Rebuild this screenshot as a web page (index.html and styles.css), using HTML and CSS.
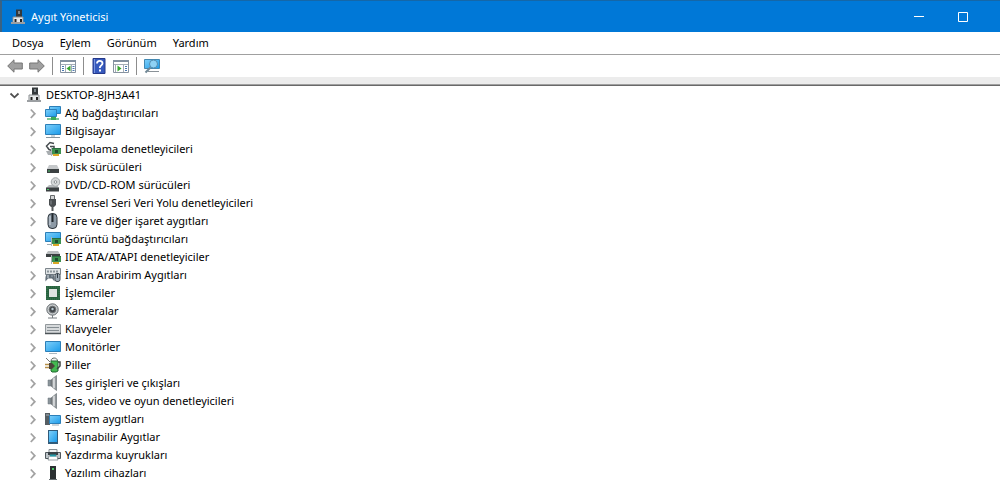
FILE: index.html
```html
<!DOCTYPE html>
<html lang="tr">
<head>
    <meta charset="UTF-8">
    <meta name="viewport" content="width=device-width, initial-scale=1.0">
    <title>Aygıt Yöneticisi</title>
    <link rel="stylesheet" href="styles.css">
</head>
<body>

<svg class="symbols" aria-hidden="true">
    <defs>
        <linearGradient id="blue" x1="0" y1="0" x2="1" y2="1">
            <stop offset="0" stop-color="#7fd0fa"/>
            <stop offset="1" stop-color="#1b9bea"/>
        </linearGradient>
        <linearGradient id="metal" x1="0" y1="0" x2="1" y2="0">
            <stop offset="0" stop-color="#606569"/>
            <stop offset="0.5" stop-color="#c4c8ca"/>
            <stop offset="1" stop-color="#777c80"/>
        </linearGradient>
    </defs>

    <symbol id="chevron" viewBox="0 0 16 16">
        <path d="M5.800 4.500 L9.800 8.700 L5.800 13" fill="none" stroke="#a3a3a3" stroke-width="1.800"/>
    </symbol>
    <symbol id="chevron-down" viewBox="0 0 16 16">
        <path d="M4.500 6.500 L8.500 10.300 L12.500 6.500" fill="none" stroke="#505050" stroke-width="1.800"/>
    </symbol>
    <symbol id="device" viewBox="0 0 16 16">
        <path d="M6 0.500 h6 v9 h-6 z" fill="#34383b"/>
        <path d="M8 2 h2 v3 h-2 z" fill="#7c858a"/>
        <path d="M3 8 h10 v6 h-10 z" fill="#e6e8e9" stroke="#8b8f92"/>
        <path d="M4.500 10 h2 v3 h-2 z M10 10 h2 v3 h-2 z" fill="#222"/>
        <path d="M1 13 h14 v2 h-14 z" fill="#9b9fa2"/>
    </symbol>
    <symbol id="board" viewBox="0 0 16 16">
        <path d="M7 7 h9 v6 h-9 z" fill="#3d9150"/>
        <path d="M7 7 h9 v1 h-9 z" fill="#2a6e41"/>
        <path d="M10 9 h3 v3 h-3 z" fill="#1d4d30"/>
        <path d="M8 13 h6 v2 h-6 z" fill="#dba828"/>
        <path d="M6 6 h1 v9 h-1 z" fill="#aeb4b8"/>
    </symbol>
    <symbol id="speaker" viewBox="0 0 16 16">
        <path d="M3 5 h3 v6 h-3 z" fill="#8b959b" stroke="#6a7378" stroke-width="0.500"/>
        <path d="M6 5 L11.500 0.500 V15.500 L6 11 z" fill="url(#metal)" stroke="#70787d" stroke-width="0.700"/>
        <path d="M9 3 v10" stroke="#eceeef"/>
    </symbol>
</svg>

<header class="titlebar">
    <svg class="icon"><use href="#device"/></svg>
    <h1>Aygıt Yöneticisi</h1>
    <div class="window-buttons">
        <button type="button" aria-label="Simge durumuna küçült">
            <svg viewBox="0 0 10 10"><path d="M0 4.500 h10" stroke="#fff"/></svg>
        </button>
        <button type="button" aria-label="Ekranı kapla">
            <svg viewBox="0 0 10 10"><path d="M0.500 0.500 h9 v9 h-9 z" fill="none" stroke="#fff"/></svg>
        </button>
    </div>
</header>

<nav class="menubar">
    <button type="button">Dosya</button>
    <button type="button">Eylem</button>
    <button type="button">Görünüm</button>
    <button type="button">Yardım</button>
</nav>

<div class="toolbar" role="toolbar" aria-label="Araçlar">
    <button type="button" aria-label="Geri">
        <svg class="icon" viewBox="0 0 16 16"><path d="M0.700 8 L7 1.800 V5 H15.300 V11 H7 V14.200 z" fill="#a0a0a0" stroke="#767676"/></svg>
    </button>
    <button type="button" aria-label="İleri">
        <svg class="icon" viewBox="0 0 16 16"><path d="M15.300 8 L9 1.800 V5 H0.700 V11 H9 V14.200 z" fill="#a0a0a0" stroke="#767676"/></svg>
    </button>
    <span class="separator"></span>
    <button type="button" aria-label="Konsol ağacını göster">
        <svg class="icon" viewBox="0 0 16 16">
            <path d="M0.500 2.500 h15 v12 h-15 z" fill="#fff" stroke="#8793a0"/>
            <path d="M0 2 h16 v2 h-16 z" fill="#8290a0"/>
            <path d="M1 6.500 h14 M5.500 7 v7 M11.500 7 v7" stroke="#a4adb7"/>
            <path d="M2 8.500 h2 M2 10.500 h2 M2 12.500 h2 M12.500 8.500 h2 M12.500 10.500 h2 M12.500 12.500 h2" stroke="#4a78b0"/>
            <path d="M10.500 7.500 v6 l-4 -3 z" fill="#36a52d"/>
        </svg>
    </button>
    <span class="separator"></span>
    <button type="button" aria-label="Yardım">
        <svg class="icon" viewBox="0 0 16 16">
            <path d="M2 0.500 h12 v15 h-12 z" fill="#3659bd" stroke="#25388a"/>
            <path d="M3.500 1 v14" stroke="#7894df"/>
            <path d="M6 5.500 C6 2 11.500 2 11.500 5.300 C11.500 7.500 8.800 7.300 8.800 10" fill="none" stroke="#fff" stroke-width="1.800"/>
            <path d="M8 11.500 h2 v2 h-2 z" fill="#fff"/>
        </svg>
    </button>
    <button type="button" aria-label="Eylem bölmesini göster">
        <svg class="icon" viewBox="0 0 16 16">
            <path d="M0.500 2.500 h15 v12 h-15 z" fill="#fff" stroke="#8793a0"/>
            <path d="M0 2 h16 v2 h-16 z" fill="#8290a0"/>
            <path d="M1 6.500 h14 M2.500 7 v7 M10.500 7 v7" stroke="#a4adb7"/>
            <path d="M12 8.500 h2 M12 10.500 h2 M12 12.500 h2" stroke="#4a78b0"/>
            <path d="M4.500 7.500 v6 l4 -3 z" fill="#36a52d"/>
        </svg>
    </button>
    <span class="separator"></span>
    <button type="button" aria-label="Donanım değişikliklerini tara">
        <svg class="icon" viewBox="0 0 16 16">
            <path d="M0.500 1.500 h15 v9 h-15 z" fill="url(#blue)" stroke="#4388b1"/>
            <path d="M4 13.500 h11" stroke="#8a9298"/>
            <circle cx="9.500" cy="6" r="4" fill="#8ed2f5" stroke="#548db0"/>
            <path d="M6.500 9.500 L1.500 14.500" stroke="#6f8795" stroke-width="2"/>
        </svg>
    </button>
</div>

<main>
    <div class="row root">
        <button type="button" class="expander" aria-label="Daralt"><svg class="icon"><use href="#chevron-down"/></svg></button>
        <svg class="icon"><use href="#device"/></svg>
        <span>DESKTOP-8JH3A41</span>
    </div>
    <ul class="tree">
        <li class="row">
            <button type="button" class="expander" aria-label="Genişlet"><svg class="icon"><use href="#chevron"/></svg></button>
            <svg class="icon" viewBox="0 0 16 16">
                <path d="M4.500 1.500 h11 v7 h-11 z" fill="url(#blue)" stroke="#2c7fb8"/>
                <path d="M0.500 4.500 h11 v7 h-11 z" fill="url(#blue)" stroke="#2c7fb8"/>
                <path d="M2 13 h12 v2 h-12 z" fill="#7fc795"/>
                <path d="M6 12 h5 v3 h-5 z" fill="#39ac58"/>
            </svg>
            <span>Ağ bağdaştırıcıları</span>
        </li>
        <li class="row">
            <button type="button" class="expander" aria-label="Genişlet"><svg class="icon"><use href="#chevron"/></svg></button>
            <svg class="icon" viewBox="0 0 16 16">
                <path d="M0.500 1.500 h15 v10 h-15 z" fill="url(#blue)" stroke="#2c7fb8"/>
                <path d="M6 12 h4 v2 h-4 z" fill="#cbd5da"/>
                <path d="M1 14.500 h14" stroke="#87959e"/>
            </svg>
            <span>Bilgisayar</span>
        </li>
        <li class="row">
            <button type="button" class="expander" aria-label="Genişlet"><svg class="icon"><use href="#chevron"/></svg></button>
            <svg class="icon" viewBox="0 0 16 16">
                <path d="M1 10 h6 l2 4 h-6 z" fill="#a8adb0"/>
                <path d="M9 2.500 L5 1.500 L1.500 5 L4 8.500 L7 9.500 M5 5.500 h4 v2" fill="none" stroke="#454b4e" stroke-width="1.500"/>
                <use href="#board"/>
            </svg>
            <span>Depolama denetleyicileri</span>
        </li>
        <li class="row">
            <button type="button" class="expander" aria-label="Genişlet"><svg class="icon"><use href="#chevron"/></svg></button>
            <svg class="icon" viewBox="0 0 16 16">
                <path d="M4 6 h8 l2 4 h-12 z" fill="#c5c8ca"/>
                <path d="M2 10 h12 v4 h-12 z" fill="#3b4042"/>
                <path d="M3 12 h2" stroke="#4bc466"/>
            </svg>
            <span>Disk sürücüleri</span>
        </li>
        <li class="row">
            <button type="button" class="expander" aria-label="Genişlet"><svg class="icon"><use href="#chevron"/></svg></button>
            <svg class="icon" viewBox="0 0 16 16">
                <path d="M4 8 h8 l2 3 h-13 z" fill="#b6babc"/>
                <circle cx="10.500" cy="5" r="4.300" fill="#d5d8d9" stroke="#a0a5a8"/>
                <circle cx="10.500" cy="5" r="1.300" fill="#fff" stroke="#898e91"/>
                <path d="M1 10.500 h13 v4 h-13 z" fill="#3b4042"/>
                <path d="M2 12.500 h2" stroke="#4bc466"/>
            </svg>
            <span>DVD/CD-ROM sürücüleri</span>
        </li>
        <li class="row">
            <button type="button" class="expander" aria-label="Genişlet"><svg class="icon"><use href="#chevron"/></svg></button>
            <svg class="icon" viewBox="0 0 16 16">
                <path d="M5.500 0.500 h4 v4 h-4 z" fill="#d3d5d6" stroke="#66696b"/>
                <path d="M4 4 h7 v6 l-2 2 h-3 l-2 -2 z" fill="#494d50"/>
                <path d="M7.500 11 v5" stroke="#55595b" stroke-width="2"/>
                <path d="M6 5.500 v4" stroke="#888d90"/>
            </svg>
            <span>Evrensel Seri Veri Yolu denetleyicileri</span>
        </li>
        <li class="row">
            <button type="button" class="expander" aria-label="Genişlet"><svg class="icon"><use href="#chevron"/></svg></button>
            <svg class="icon" viewBox="0 0 16 16">
                <rect x="3" y="0.500" width="9" height="15" rx="4" fill="#8d9aa6" stroke="#2f373e"/>
                <path d="M5 3 v9" stroke="#d3dbe2"/>
                <path d="M7.500 1 v8" stroke="#20272c" stroke-width="2"/>
            </svg>
            <span>Fare ve diğer işaret aygıtları</span>
        </li>
        <li class="row">
            <button type="button" class="expander" aria-label="Genişlet"><svg class="icon"><use href="#chevron"/></svg></button>
            <svg class="icon" viewBox="0 0 16 16">
                <path d="M0.500 1.500 h15 v9 h-15 z" fill="url(#blue)" stroke="#2c7fb8"/>
                <path d="M2 13.500 h5" stroke="#9ca9b0"/>
                <use href="#board"/>
            </svg>
            <span>Görüntü bağdaştırıcıları</span>
        </li>
        <li class="row">
            <button type="button" class="expander" aria-label="Genişlet"><svg class="icon"><use href="#chevron"/></svg></button>
            <svg class="icon" viewBox="0 0 16 16">
                <path d="M3 2 h10 l2 3 h-14 z" fill="#b9bdbf"/>
                <path d="M1 5 h14 v3 h-14 z" fill="#3b4042"/>
                <use href="#board"/>
            </svg>
            <span>IDE ATA/ATAPI denetleyiciler</span>
        </li>
        <li class="row">
            <button type="button" class="expander" aria-label="Genişlet"><svg class="icon"><use href="#chevron"/></svg></button>
            <svg class="icon" viewBox="0 0 16 16">
                <path d="M0.500 1.500 h15 v6 h-15 z" fill="#e0e4e6" stroke="#7c858b"/>
                <path d="M2 4.500 h12" stroke="#8b959b" stroke-width="2" stroke-dasharray="2 1"/>
                <path d="M0.500 14.500 C0 7 2 7 5 7.500 C8 7 10 7 9.500 14.500 L7 11.500 H3 z" fill="#65717b"/>
                <path d="M3 8 v3 M6.500 9 h1" stroke="#dce3e8"/>
                <rect x="10" y="6.500" width="5" height="8" rx="2" fill="#9eabb5" stroke="#424c54"/>
                <path d="M12.500 7 v4" stroke="#333c43"/>
            </svg>
            <span>İnsan Arabirim Aygıtları</span>
        </li>
        <li class="row">
            <button type="button" class="expander" aria-label="Genişlet"><svg class="icon"><use href="#chevron"/></svg></button>
            <svg class="icon" viewBox="0 0 16 16">
                <path d="M1 1 h14 v14 h-14 z" fill="#28623f"/>
                <path d="M2 2 h12 v12 h-12 z" fill="none" stroke="#4b8f62" stroke-width="0.600" stroke-dasharray="1 1"/>
                <path d="M4 4 h8 v8 h-8 z" fill="#dfe4e1"/>
            </svg>
            <span>İşlemciler</span>
        </li>
        <li class="row">
            <button type="button" class="expander" aria-label="Genişlet"><svg class="icon"><use href="#chevron"/></svg></button>
            <svg class="icon" viewBox="0 0 16 16">
                <circle cx="7.500" cy="6.500" r="5.700" fill="#c4c8ca" stroke="#666c70"/>
                <circle cx="7.500" cy="6.500" r="3.300" fill="#42474b" stroke="#6c7073"/>
                <circle cx="7.500" cy="6" r="1.200" fill="#b7c8d2"/>
                <path d="M7.500 12 v3 M3 15 h9" stroke="#777d80"/>
            </svg>
            <span>Kameralar</span>
        </li>
        <li class="row">
            <button type="button" class="expander" aria-label="Genişlet"><svg class="icon"><use href="#chevron"/></svg></button>
            <svg class="icon" viewBox="0 0 16 16">
                <path d="M0.500 3.500 h15 v9 h-15 z" fill="#d6d9db" stroke="#92989c"/>
                <path d="M2 6.500 h12 M2 9.500 h12" stroke="#858d92"/>
                <path d="M0 12.500 h16" stroke="#4d5458" stroke-width="1.500"/>
            </svg>
            <span>Klavyeler</span>
        </li>
        <li class="row">
            <button type="button" class="expander" aria-label="Genişlet"><svg class="icon"><use href="#chevron"/></svg></button>
            <svg class="icon" viewBox="0 0 16 16">
                <path d="M0.500 2.500 h15 v10 h-15 z" fill="url(#blue)" stroke="#2c7fb8"/>
                <path d="M4 14.500 h8" stroke="#abb8c0"/>
            </svg>
            <span>Monitörler</span>
        </li>
        <li class="row">
            <button type="button" class="expander" aria-label="Genişlet"><svg class="icon"><use href="#chevron"/></svg></button>
            <svg class="icon" viewBox="0 0 16 16">
                <path d="M6 4 C6 0 12.500 0 12.500 4" fill="#eef1ef" stroke="#626c66"/>
                <path d="M6 4 h7 v10 l-2 1 h-4 l-1 -1 z" fill="#43b850" stroke="#236b32"/>
                <path d="M13 5 h2 v4 l-3 3" fill="none" stroke="#3e4641" stroke-width="1.500"/>
                <path d="M1 1 L5 5" stroke="#777"/>
                <path d="M4 6 h3 l3 3 -3 3 h-3 z" fill="#4b443a"/>
                <path d="M0 7.500 h4 M0 10.500 h4" stroke="#b6904a" stroke-width="1.500"/>
            </svg>
            <span>Piller</span>
        </li>
        <li class="row">
            <button type="button" class="expander" aria-label="Genişlet"><svg class="icon"><use href="#chevron"/></svg></button>
            <svg class="icon"><use href="#speaker"/></svg>
            <span>Ses girişleri ve çıkışları</span>
        </li>
        <li class="row">
            <button type="button" class="expander" aria-label="Genişlet"><svg class="icon"><use href="#chevron"/></svg></button>
            <svg class="icon"><use href="#speaker"/></svg>
            <span>Ses, video ve oyun denetleyicileri</span>
        </li>
        <li class="row">
            <button type="button" class="expander" aria-label="Genişlet"><svg class="icon"><use href="#chevron"/></svg></button>
            <svg class="icon" viewBox="0 0 16 16">
                <path d="M0 2 h5 v12 h-5 z" fill="#565e63"/>
                <path d="M1 4 h3" stroke="#a8b3ba"/>
                <path d="M4.500 4.500 h11 v8 h-11 z" fill="url(#blue)" stroke="#2c7fb8"/>
                <path d="M7 14 h7" stroke="#9babb5"/>
            </svg>
            <span>Sistem aygıtları</span>
        </li>
        <li class="row">
            <button type="button" class="expander" aria-label="Genişlet"><svg class="icon"><use href="#chevron"/></svg></button>
            <svg class="icon" viewBox="0 0 16 16">
                <path d="M3 1 h10 v14 h-10 z" fill="#315b7a"/>
                <path d="M4 2 h8 v11 h-8 z" fill="url(#blue)"/>
            </svg>
            <span>Taşınabilir Aygıtlar</span>
        </li>
        <li class="row">
            <button type="button" class="expander" aria-label="Genişlet"><svg class="icon"><use href="#chevron"/></svg></button>
            <svg class="icon" viewBox="0 0 16 16">
                <path d="M4 2.500 h8 v3 h-8 z" fill="#f0f2f3" stroke="#868e93"/>
                <path d="M0.500 5.500 h15 v6 h-15 z" fill="#bec5c9" stroke="#50585d"/>
                <path d="M3 5 h10 v3 h-10 z" fill="#394247"/>
                <path d="M4 9 h8 l1 4 h-10 z" fill="#fff" stroke="#59666d" stroke-width="0.600"/>
                <path d="M5 8.500 h6" stroke="#249aa9" stroke-width="2"/>
            </svg>
            <span>Yazdırma kuyrukları</span>
        </li>
        <li class="row">
            <button type="button" class="expander" aria-label="Genişlet"><svg class="icon"><use href="#chevron"/></svg></button>
            <svg class="icon" viewBox="0 0 16 16">
                <path d="M5 1 h6 v13 h-6 z" fill="#2b3032"/>
                <path d="M7 3 h2 v2 h-2 z" fill="#45c760"/>
                <path d="M4 14.500 h8" stroke="#666e72"/>
            </svg>
            <span>Yazılım cihazları</span>
        </li>
    </ul>
</main>

</body>
</html>
```
FILE: styles.css
```css
body {
    font-family: 'Noto Sans', 'Open Sans', sans-serif;
    font-size: 11px;
    line-height: 18px;
    background-color: #fff;
    color: #000;
    margin: 0;
}

button {
    display: flex;
    align-items: center;
    justify-content: center;
    border: 0;
    padding: 0;
    background: none;
    color: inherit;
    font: inherit;
}

/* Shared gradients and icons, takes no room itself */
.symbols {
    display: block;
    width: 0;
    height: 0;
}

.icon {
    display: block;
    flex: none;
    width: 16px;
    height: 16px;
}

.titlebar {
    display: flex;
    align-items: center;
    gap: 5px;
    height: 31px;
    padding-left: 8px;
    border-top: 1px solid #1567a8;
    border-left: 2px solid #3a6283;
    background-color: #0078d7;
    color: #fff;
}

.titlebar h1 {
    margin: 0;
    font-size: 11px;
    font-weight: normal;
}

.window-buttons {
    display: flex;
    margin-left: auto;
    padding-right: 15px;
}

.window-buttons button {
    width: 44px;
    height: 30px;
}

.window-buttons svg {
    width: 10px;
    height: 10px;
}

.menubar {
    display: flex;
    gap: 16px;
    height: 22px;
    padding-left: 12px;
    border-bottom: 1px solid #a0a0a0;
}

.menubar button {
    height: 22px;
}

.toolbar {
    display: flex;
    align-items: center;
    gap: 6px;
    height: 22px;
    padding-left: 7px;
}

.separator {
    width: 1px;
    height: 18px;
    margin: 0 1px;
    background-color: #8d8d8d;
}

main {
    border-top: 7px solid #ececec;
}

/* Edge between toolbar and tree */
main::before {
    content: "";
    display: block;
    height: 1px;
    border-top: 1px solid #a0a0a0;
    background-color: #696969;
}

.row {
    display: flex;
    align-items: center;
    gap: 4px;
    height: 18px;
    white-space: nowrap;
}

.root {
    padding-left: 6px;
}

.tree {
    list-style: none;
    margin: 0;
    padding: 0 0 0 25px;
}
```
